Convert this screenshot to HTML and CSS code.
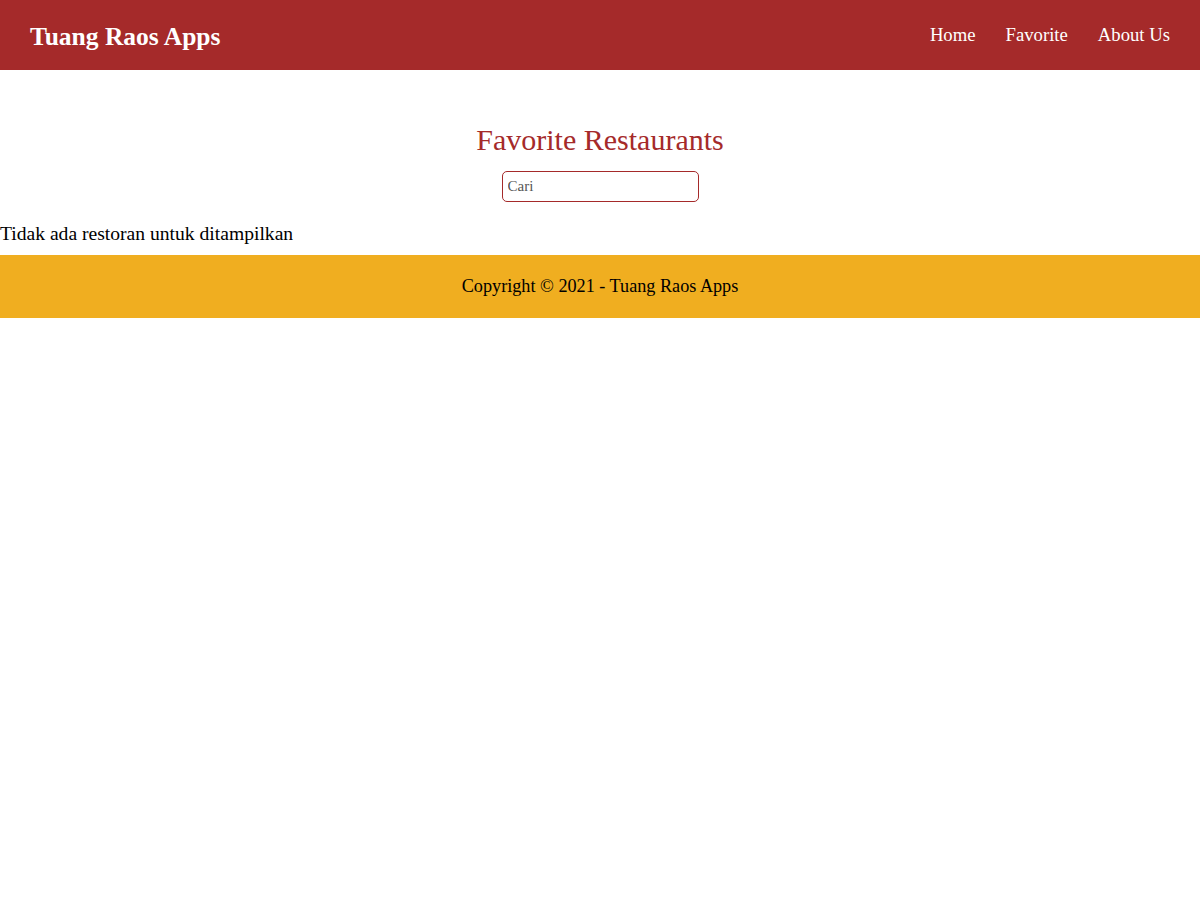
FILE: index.html
```html
<!DOCTYPE html>
<html lang="id">
<head>
<meta charset="utf-8">
<title>Tuang Raos Apps</title>
<link rel="stylesheet" href="styles.css">
</head>
<body>
<header class="app-bar">
  <h1 class="brand">Tuang Raos Apps</h1>
  <nav class="nav">
    <a class="nav-link" href="#">Home</a>
    <a class="nav-link" href="#">Favorite</a>
    <a class="nav-link" href="#">About Us</a>
  </nav>
</header>
<main class="content">
  <section class="favorites">
    <h2 class="favorites-title">Favorite Restaurants</h2>
    <input class="search" type="text" placeholder="Cari">
  </section>
  <p class="empty">Tidak ada restoran untuk ditampilkan</p>
</main>
<footer class="footer">
  <p class="footer-text">Copyright © 2021 - Tuang Raos Apps</p>
</footer>
</body>
</html>
```

FILE: styles.css
```css
* { box-sizing: border-box; }
body {
  margin: 0;
  font-family: "Liberation Serif", "Times New Roman", serif;
  color: #000;
  background: #fff;
}
.app-bar {
  height: 70px;
  background: #a52a2a;
  display: flex;
  align-items: center;
  justify-content: space-between;
  padding: 0 30px;
}
.brand {
  margin: 3px 0 0;
  color: #fff;
  font-size: 25.5px;
  font-weight: bold;
}
.nav {
  display: flex;
  gap: 30px;
}
.nav-link {
  color: #fff;
  text-decoration: none;
  font-size: 18.7px;
}
.content { padding-top: 50px; }
.favorites {
  display: flex;
  flex-direction: column;
  align-items: center;
}
.favorites-title {
  margin: 0;
  color: #a52a2a;
  font-size: 30px;
  font-weight: normal;
  line-height: 40px;
}
.search {
  margin-top: 11px;
  width: 197px;
  height: 31px;
  border: 1px solid #a52a2a;
  border-radius: 5px;
  padding: 0 5px;
  font-family: inherit;
  font-size: 15px;
}
.search::placeholder { color: #555; }
.empty {
  margin: 20px 0 9px;
  font-size: 19.6px;
  line-height: 24px;
}
.footer {
  background: #f0ae20;
  height: 63px;
  display: flex;
  align-items: center;
  justify-content: center;
}
.footer-text {
  margin: 0;
  font-size: 18.2px;
}
```
